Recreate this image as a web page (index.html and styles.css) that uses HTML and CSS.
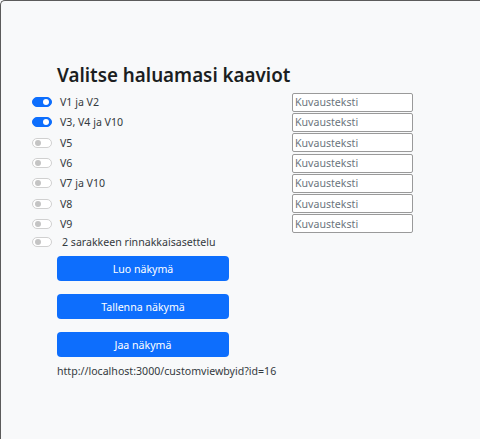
FILE: index.html
```html
<!DOCTYPE html>
<html lang="fi">
<head>
<meta charset="utf-8">
<title>Valitse haluamasi kaaviot</title>
<link rel="stylesheet" href="styles.css">
</head>
<body>
<div class="frame">
  <h1 class="title">Valitse haluamasi kaaviot</h1>
  <div class="rows">
    <div class="row">
      <label class="check"><span class="switch on"></span><span class="label">V1 ja V2</span></label>
      <input class="caption" type="text" placeholder="Kuvausteksti">
    </div>
    <div class="row">
      <label class="check"><span class="switch on"></span><span class="label">V3, V4 ja V10</span></label>
      <input class="caption" type="text" placeholder="Kuvausteksti">
    </div>
    <div class="row">
      <label class="check"><span class="switch"></span><span class="label">V5</span></label>
      <input class="caption" type="text" placeholder="Kuvausteksti">
    </div>
    <div class="row">
      <label class="check"><span class="switch"></span><span class="label">V6</span></label>
      <input class="caption" type="text" placeholder="Kuvausteksti">
    </div>
    <div class="row">
      <label class="check"><span class="switch"></span><span class="label">V7 ja V10</span></label>
      <input class="caption" type="text" placeholder="Kuvausteksti">
    </div>
    <div class="row">
      <label class="check"><span class="switch"></span><span class="label">V8</span></label>
      <input class="caption" type="text" placeholder="Kuvausteksti">
    </div>
    <div class="row">
      <label class="check"><span class="switch"></span><span class="label">V9</span></label>
      <input class="caption" type="text" placeholder="Kuvausteksti">
    </div>
    <div class="row last">
      <label class="check"><span class="switch"></span><span class="label wide">2 sarakkeen rinnakkaisasettelu</span></label>
    </div>
  </div>
  <div class="actions">
    <button class="btn">Luo näkymä</button>
    <button class="btn">Tallenna näkymä</button>
    <button class="btn">Jaa näkymä</button>
  </div>
  <p class="url">http://localhost:3000/customviewbyid?id=16</p>
</div>
</body>
</html>
```
FILE: styles.css
```css
html, body {
  margin: 0;
  padding: 0;
  height: 100%;
  overflow: hidden;
}
body {
  background: #f8f9fa;
  font-family: "Noto Sans", "Open Sans", sans-serif;
  color: #212529;
}
.frame {
  box-sizing: border-box;
  height: 100%;
  border-top: 1px solid #5b5b5b;
  border-left: 1px solid #5b5b5b;
  border-top-left-radius: 5px;
  background: #f8f9fa;
  padding-top: 61px;
}
.title {
  margin: 0 0 4px 56px;
  font-size: 18.8px;
  line-height: 26px;
  font-weight: 600;
  color: #1b1e21;
}
.rows {
  display: grid;
  grid-auto-rows: 20.3px;
}
.row {
  display: flex;
  align-items: center;
  justify-content: space-between;
  width: 412px;
  padding-left: 31px;
  box-sizing: border-box;
}
.row.last {
  height: 17px;
  margin-top: -1px;
}
.check {
  display: flex;
  align-items: center;
}
.switch {
  position: relative;
  box-sizing: border-box;
  width: 20px;
  height: 10px;
  border-radius: 5px;
  border: 1px solid #d0d0d0;
  background: #fff;
}
.switch::after {
  content: "";
  position: absolute;
  top: 1px;
  left: 2px;
  width: 6px;
  height: 6px;
  border-radius: 50%;
  background: #c4c4c4;
}
.switch.on {
  background: #0d6efd;
  border-color: #0d6efd;
}
.switch.on::after {
  left: auto;
  right: 2px;
  background: #fff;
}
.label {
  margin-left: 8px;
  font-size: 10.6px;
  color: #343a40;
}
.label.wide {
  margin-left: 10px;
}
.caption {
  box-sizing: border-box;
  width: 121px;
  height: 19px;
  margin: 0;
  padding: 0 2px;
  border: 1px solid #9a9a9a;
  border-radius: 2px;
  background: #fff;
  font-family: inherit;
  font-size: 10.6px;
  color: #212529;
}
.caption::placeholder {
  color: #6c757d;
}
.actions {
  display: flex;
  flex-direction: column;
  gap: 13px;
  margin: 2px 0 0 56px;
  width: 172px;
}
.btn {
  height: 25px;
  border: none;
  border-radius: 4px;
  background: #0d6efd;
  color: #fff;
  font-family: inherit;
  font-size: 10.6px;
  padding: 0;
}
.url {
  margin: 8px 0 0 56px;
  font-size: 10.6px;
  line-height: 13px;
  color: #343a40;
}
```
